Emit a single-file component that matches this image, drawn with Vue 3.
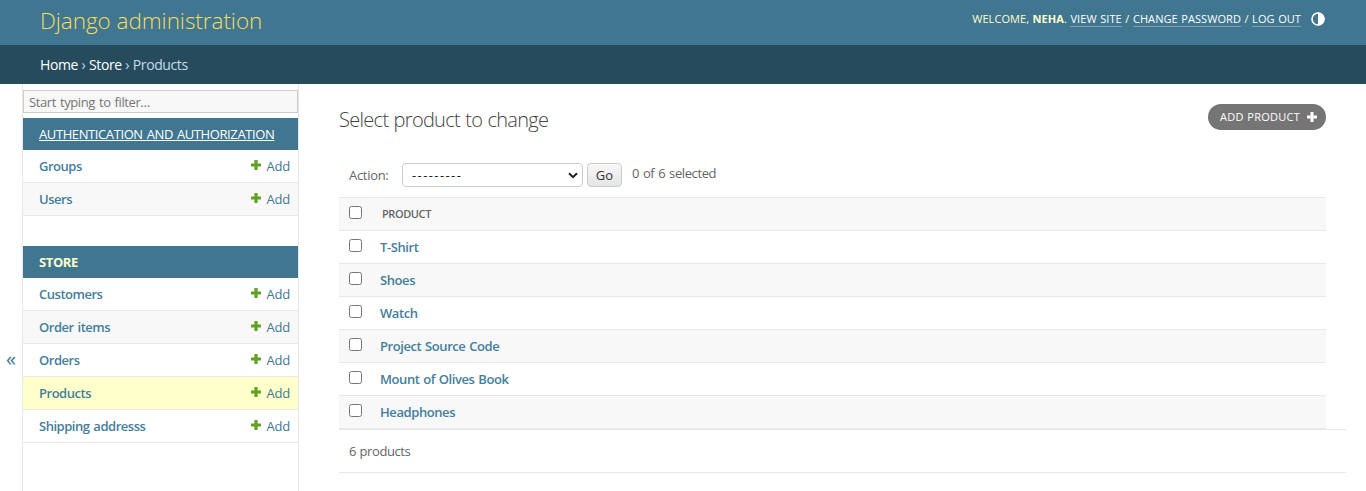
<script setup>
const groups = [
  { name: 'Authentication and Authorization', linked: true, models: ['Groups', 'Users'] },
  { name: 'Store', linked: false, models: ['Customers', 'Order items', 'Orders', 'Products', 'Shipping addresss'] },
]
const products = ['T-Shirt', 'Shoes', 'Watch', 'Project Source Code', 'Mount of Olives Book', 'Headphones']
</script>

<template>
  <div class="page">
    <header class="header">
      <h1 class="brand"><span>Django administration</span></h1>
      <div class="user-tools">
        <span class="tools-text">Welcome, <strong>Neha</strong>. <a>View site</a> / <a>Change password</a> / <a>Log out</a></span>
        <svg class="theme" viewBox="0 0 14 14"><circle cx="7" cy="7" r="6" fill="none" stroke="#fff" stroke-width="1.6" /><path d="M7 .5a6.5 6.5 0 0 1 0 13z" fill="#fff" /></svg>
      </div>
    </header>
    <nav class="crumbs"><span><b>Home</b> › <b>Store</b> › Products</span></nav>
    <div class="body">
      <div class="toggle"><span>«</span></div>
      <aside class="sidebar">
        <input class="filter" type="text" placeholder="Start typing to filter…" />
        <section v-for="g in groups" :key="g.name" class="group">
          <h2 class="caption" :class="{ linked: g.linked }"><span>{{ g.name }}</span></h2>
          <div v-for="(m, i) in g.models" :key="m" class="model" :class="{ alt: m === 'Users' || m === 'Order items', current: m === 'Products' }">
            <span class="model-name">{{ m }}</span>
            <span class="add">
              <svg viewBox="0 0 10 10"><path d="M3.4 0h3.2v3.4H10v3.2H6.6V10H3.4V6.6H0V3.4h3.4z" fill="#5fa225" /></svg>
              <span>Add</span>
            </span>
          </div>
        </section>
      </aside>
      <main class="main">
        <div class="title-row">
          <h1 class="title">Select product to change</h1>
          <a class="add-button"><span>Add product</span><svg viewBox="0 0 10 10"><path d="M3.5 0h3v3.5H10v3H6.5V10h-3V6.5H0v-3h3.5z" fill="#fff" /></svg></a>
        </div>
        <div class="actions">
          <span class="label">Action:</span>
          <div class="select"><span>---------</span><svg viewBox="0 0 10 7"><path d="M1 1.2l4 4 4-4" fill="none" stroke="#222" stroke-width="2" /></svg></div>
          <button class="go">Go</button>
          <span class="counter">0 of 6 selected</span>
        </div>
        <div class="table">
          <div class="row head"><i class="check"></i><span>Product</span></div>
          <div v-for="(p, i) in products" :key="p" class="row" :class="{ alt: i % 2 === 1 }"><i class="check"></i><span>{{ p }}</span></div>
        </div>
        <div class="paginator"><span>6 products</span></div>
      </main>
    </div>
  </div>
</template>

<style>
body { margin: 0; overflow: hidden; }
</style>

<style scoped>
* { box-sizing: border-box; }
h1, h2 { margin: 0; font-weight: 400; }
.page { width: 1366px; height: 491px; overflow: hidden; display: flex; flex-direction: column; background: #fff; color: #666; font: 13px/18px "Open Sans", "Noto Sans", sans-serif; white-space: nowrap; }
.header { height: 45px; flex: none; padding: 0 41px 0 40px; display: flex; justify-content: space-between; background: #417690; color: #ffc; }
.brand { font-size: 22.5px; line-height: 41px; font-weight: 300; color: #f5dd5d; letter-spacing: -0.05px; }
.user-tools { display: flex; align-items: flex-start; padding-top: 11px; font-size: 11px; line-height: 16px; text-transform: uppercase; }
.tools-text { letter-spacing: 0.07px; word-spacing: 0.6px; }
.user-tools a { color: #fff; display: inline-block; line-height: 15px; border-bottom: 1px solid #7b9fb1; }
.theme { width: 14px; height: 14px; margin: 1px 0 0 10px; }
.crumbs { height: 39px; flex: none; padding-left: 40px; background: #264b5d; color: #c4dce8; font-size: 14px; line-height: 40px; letter-spacing: -0.4px; word-spacing: 0.4px; }
.crumbs b { color: #fff; font-weight: 500; }
.body { flex: 1; display: flex; min-height: 0; }
.toggle { width: 22px; flex: none; padding-top: 265px; text-align: center; font-size: 20px; line-height: 20px; color: #417690; }
.sidebar { width: 277px; flex: none; border: solid #e8e8e8; border-width: 0 1px; padding-top: 6px; }
.filter { display: block; width: 275px; height: 23px; margin: 0 0 5px; padding: 1px 5px; border: 1px solid #ccc; border-radius: 0; background: #f8f8f8; font: 13px/18px "Open Sans", sans-serif; letter-spacing: -0.4px; word-spacing: 1px; }
.filter::placeholder { color: #757575; }
.group { margin-bottom: 30px; }
.caption { height: 32px; padding-left: 16px; background: #417690; color: #ffc; font-size: 13px; font-weight: 700; line-height: 32px; text-transform: uppercase; letter-spacing: -0.4px; }
.caption.linked { color: #fff; font-weight: 400; text-decoration: underline; word-spacing: 1px; }
.model { height: 33px; padding: 0 8px 0 16px; border-bottom: 1px solid #e8e8e8; display: flex; justify-content: space-between; line-height: 32px; color: #447e9b; }
.model-name { font-weight: 600; letter-spacing: -0.48px; word-spacing: 1px; }
.alt { background: #f8f8f8; }
.current { background: #ffc; }
.add { display: flex; gap: 5px; color: #417893; letter-spacing: -0.2px; }
.add svg { width: 10px; height: 10px; margin-top: 10px; }
.main { flex: 1; padding: 20px 20px 0 40px; }
.title-row { display: flex; justify-content: space-between; height: 26px; margin-right: 20px; }
.title { font-size: 20px; line-height: 31px; font-weight: 300; color: #444; letter-spacing: -0.7px; word-spacing: 0.7px; }
.add-button { width: 118px; height: 26px; border-radius: 13px; background: #757575; color: #fff; padding: 0 9px 0 12px; display: flex; align-items: center; justify-content: space-between; font-size: 11px; text-transform: uppercase; letter-spacing: 0.25px; word-spacing: 0.5px; }
.add-button svg { width: 10px; height: 10px; }
.actions { height: 34px; margin-top: 33px; padding-left: 10px; display: flex; }
.label { width: 53px; line-height: 25px; letter-spacing: -0.3px; }
.select { width: 181px; height: 24px; border: 1px solid #ccc; border-radius: 4px; padding: 0 4px 0 9px; display: flex; align-items: center; justify-content: space-between; color: #222; }
.select span { line-height: 22px; font-size: 13px; letter-spacing: 1.4px; }
.select svg { width: 10px; height: 7px; }
.go { width: 35px; height: 24px; margin: 0 10px 0 4px; padding: 0; border: 1px solid #ccc; border-radius: 4px; background: linear-gradient(#f8f8f8, #e4e4e4); color: #333; font: 13px/20px "Open Sans", sans-serif; }
.counter { line-height: 21px; letter-spacing: -0.4px; word-spacing: 0.9px; }
.table { width: 987px; border-top: 1px solid #e8e8e8; }
.row { height: 33px; padding-left: 10px; border-bottom: 1px solid #e8e8e8; display: flex; font-weight: 600; line-height: 32px; color: #447e9b; letter-spacing: -0.42px; word-spacing: 0.8px; }
.head { background: #f8f8f8; font-size: 11px; text-transform: uppercase; color: #666; }
.head span { margin-left: 2px; }
.check { width: 13px; height: 13px; margin: 8px 18px 0 0; border: 1px solid #767676; border-radius: 2.5px; background: #fff; }
.paginator { height: 44px; padding-left: 10px; border: solid #e8e8e8; border-width: 1px 0; line-height: 43px; letter-spacing: -0.4px; word-spacing: 0.5px; }
</style>
